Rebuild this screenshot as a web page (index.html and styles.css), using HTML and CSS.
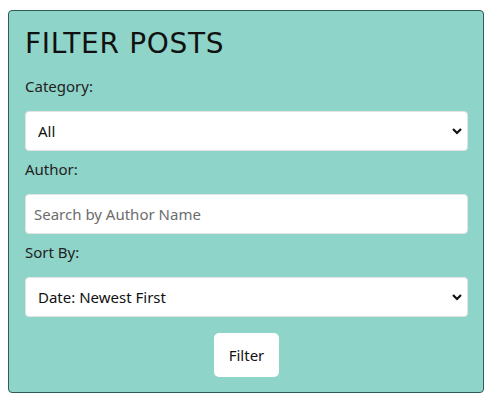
FILE: index.html
```html
<!DOCTYPE html>
<html>
<head>
<meta charset="utf-8">
<link rel="stylesheet" href="styles.css">
</head>
<body>
<form class="card">
  <h2 class="title">FILTER POSTS</h2>
  <label class="label" for="cat">Category:</label>
  <select class="field select" id="cat"><option>All</option></select>
  <label class="label" for="author">Author:</label>
  <input class="field input" id="author" type="text" placeholder="Search by Author Name">
  <label class="label" for="sort">Sort By:</label>
  <select class="field select" id="sort"><option>Date: Newest First</option></select>
  <div class="actions"><button class="btn" type="button">Filter</button></div>
</form>
</body>
</html>
```
FILE: styles.css
```css
html, body { margin: 0; padding: 0; background: #fff; }
body { padding: 10px 7px 0 8px; font-family: "Noto Sans", "Open Sans", sans-serif; }
.card {
  display: flex;
  flex-direction: column;
  background: #8fd4c8;
  border: 1px solid #2e5d58;
  border-radius: 4px;
  padding: 16px 15px 15px 16px;
}
.title {
  margin: 0 0 13px 0;
  font-family: "DejaVu Sans", sans-serif;
  font-weight: 400;
  font-size: 28px;
  line-height: 34px;
  color: #111;
  letter-spacing: 0.7px;
}
.label {
  font-size: 15px;
  line-height: 24px;
  color: #222;
  margin-bottom: 13px;
}
.field {
  box-sizing: border-box;
  width: 100%;
  height: 40px;
  border: 1px solid #e3e3e3;
  border-radius: 4px;
  background-color: #fff;
  font-family: "Noto Sans", sans-serif;
  font-size: 15px;
  color: #111;
  margin: 0 0 6px 0;
  outline: none;
}
.select {
  appearance: none;
  -webkit-appearance: none;
  padding: 0 30px 0 12px;
  background-image: url("data:image/svg+xml;utf8,<svg xmlns='http://www.w3.org/2000/svg' width='12' height='8' viewBox='0 0 12 8'><path d='M2 2 L6 6 L10 2' fill='none' stroke='%23111' stroke-width='2.2'/></svg>");
  background-repeat: no-repeat;
  background-position: right 4px center;
}
.input { padding: 0 8px; }
.input::placeholder { color: #6c6c6c; }
.actions {
  display: flex;
  justify-content: center;
  margin-top: 10px;
}
.btn {
  background: #fff;
  border: none;
  border-radius: 5px;
  width: 65px;
  height: 44px;
  font-family: "Noto Sans", sans-serif;
  font-size: 15px;
  color: #111;
  padding: 0;
}
```
